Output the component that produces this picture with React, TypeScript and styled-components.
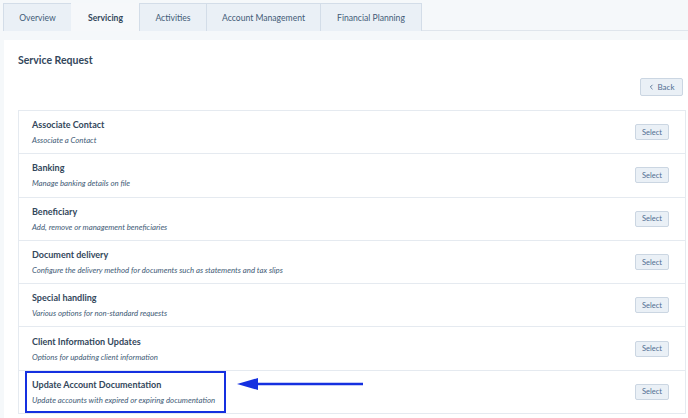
import React from "react";
import styled, { createGlobalStyle } from "styled-components";

const Global = createGlobalStyle`
  html, body { margin: 0; padding: 0; background: #f5f8fa; }
  body { font-family: Lato, "Open Sans", sans-serif; color: #33475b; }
  * { box-sizing: border-box; }
`;

const Page = styled.div`
  width: 688px;
  height: 418px;
  overflow: hidden;
  padding: 3px 0 0 4px;
  background: #f5f8fa;
`;

const TabBar = styled.div`
  display: flex;
  height: 28px;
  border-bottom: 1px solid #dfe5ec;
`;

const Tab = styled.div<{ $active?: boolean; $width: number }>`
  display: flex;
  align-items: center;
  justify-content: center;
  width: ${(p) => p.$width}px;
  height: 28px;
  font-size: 8.6px;
  color: ${(p) => (p.$active ? "#33475b" : "#425b76")};
  font-weight: ${(p) => (p.$active ? 700 : 400)};
  background: ${(p) => (p.$active ? "#f6f8fa" : "#eaf0f6")};
  border: 1px solid ${(p) => (p.$active ? "transparent" : "#d3dde8")};
  border-bottom: none;
  margin-left: -1px;
`;

const Panel = styled.div`
  margin-top: 9px;
  background: #ffffff;
  height: 400px;
  padding: 13px 2px 0 14px;
  display: flex;
  flex-direction: column;
`;

const Heading = styled.h2`
  margin: 0;
  font-size: 10.5px;
  font-weight: 700;
  line-height: 14px;
  color: #33475b;
`;

const Toolbar = styled.div`
  display: flex;
  justify-content: flex-end;
  padding: 11px 3px 0 0;
  height: 43px;
`;

const Button = styled.button`
  font-family: Lato, sans-serif;
  font-size: 7.5px;
  color: #506e91;
  background: #eaf0f6;
  border: 1px solid #cbd6e2;
  border-radius: 2px;
  padding: 0;
  display: flex;
  align-items: center;
  justify-content: center;
  gap: 4px;
`;

const BackButton = styled(Button)`
  width: 43px;
  height: 18px;
  font-size: 8px;
`;

const SelectButton = styled(Button)`
  width: 34px;
  height: 16px;
`;

const List = styled.div`
  border: 1px solid #e5eaf0;
  border-bottom: none;
  display: flex;
  flex-direction: column;
`;

const Row = styled.div`
  position: relative;
  height: 43.3px;
  display: flex;
  align-items: center;
  justify-content: space-between;
  padding: 0 16px 0 13px;
  border-bottom: 1px solid #e5eaf0;
`;

const RowText = styled.div`
  display: flex;
  flex-direction: column;
  gap: 5px;
`;

const Title = styled.div`
  font-size: 9px;
  font-weight: 700;
  line-height: 11px;
  color: #33475b;
`;

const Desc = styled.div`
  font-size: 7.8px;
  font-style: italic;
  line-height: 10px;
  color: #425b76;
`;

const Highlight = styled.div`
  position: absolute;
  left: 6px;
  top: 0;
  width: 201px;
  height: 42px;
  border: 2.5px solid #1530e0;
`;

const Arrow = styled.svg`
  position: absolute;
  left: 218px;
  top: 6px;
`;

const tabs = [
  { label: "Overview", w: 69 },
  { label: "Servicing", w: 69, active: true },
  { label: "Activities", w: 68 },
  { label: "Account Management", w: 115 },
  { label: "Financial Planning", w: 102 },
];

const rows = [
  ["Associate Contact", "Associate a Contact"],
  ["Banking", "Manage banking details on file"],
  ["Beneficiary", "Add, remove or management beneficiaries"],
  ["Document delivery", "Configure the delivery method for documents such as statements and tax slips"],
  ["Special handling", "Various options for non-standard requests"],
  ["Client Information Updates", "Options for updating client information"],
  ["Update Account Documentation", "Update accounts with expired or expiring documentation"],
];

export default function App() {
  return (
    <Page>
      <Global />
      <TabBar>
        {tabs.map((t) => (
          <Tab key={t.label} $active={t.active} $width={t.w}>
            {t.label}
          </Tab>
        ))}
      </TabBar>
      <Panel>
        <Heading>Service Request</Heading>
        <Toolbar>
          <BackButton>
            <svg width="5" height="6" viewBox="0 0 5 6">
              <path d="M3.5 0.8 L1.3 3 L3.5 5.2" fill="none" stroke="#506e91" strokeWidth="0.9" />
            </svg>
            Back
          </BackButton>
        </Toolbar>
        <List>
          {rows.map(([title, desc], i) => (
            <Row key={title}>
              <RowText>
                <Title>{title}</Title>
                <Desc>{desc}</Desc>
              </RowText>
              <SelectButton>Select</SelectButton>
              {i === rows.length - 1 && (
                <>
                  <Highlight />
                  <Arrow width="128" height="14" viewBox="0 0 128 14">
                    <path d="M20 7 L126 7" stroke="#1530e0" strokeWidth="2.6" />
                    <path d="M0 7 L21 1 L21 13 Z" fill="#1530e0" />
                  </Arrow>
                </>
              )}
            </Row>
          ))}
        </List>
      </Panel>
    </Page>
  );
}
